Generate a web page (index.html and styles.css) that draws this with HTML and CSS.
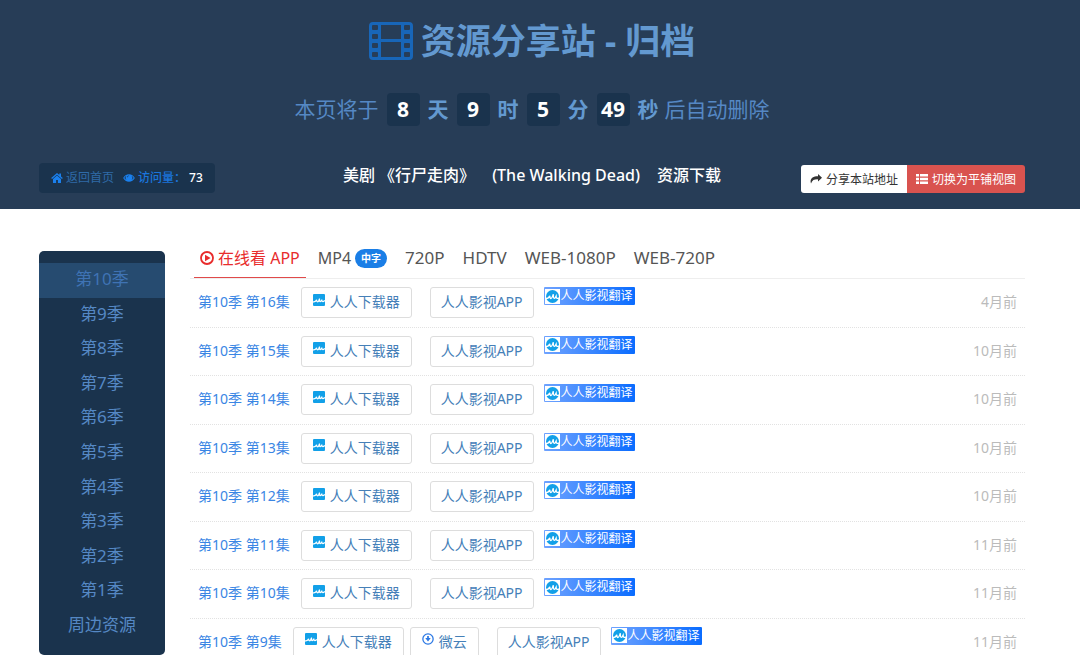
FILE: index.html
```html
<!DOCTYPE html>
<html lang="zh-CN">
<head>
    <meta charset="UTF-8">
    <meta name="viewport" content="width=device-width, initial-scale=1.0">
    <title>资源分享站 - 归档</title>
    <link rel="stylesheet" href="styles.css">
</head>
<body>
    <!-- Shared icons -->
    <svg class="sprite" aria-hidden="true">
        <symbol id="icon-film" viewBox="0 0 44 38">
            <path fill-rule="evenodd" d="M4 0h36a4 4 0 0 1 4 4v30a4 4 0 0 1-4 4H4a4 4 0 0 1-4-4V4a4 4 0 0 1 4-4zM12 3v14h20V3zM12 20v15h20V20zM4 3a1 1 0 0 0-1 1v3a1 1 0 0 0 1 1h4a1 1 0 0 0 1-1V4a1 1 0 0 0-1-1zM4 12a1 1 0 0 0-1 1v3a1 1 0 0 0 1 1h4a1 1 0 0 0 1-1v-3a1 1 0 0 0-1-1zM4 21a1 1 0 0 0-1 1v3a1 1 0 0 0 1 1h4a1 1 0 0 0 1-1v-3a1 1 0 0 0-1-1zM4 30a1 1 0 0 0-1 1v3a1 1 0 0 0 1 1h4a1 1 0 0 0 1-1v-3a1 1 0 0 0-1-1zM36 3a1 1 0 0 0-1 1v3a1 1 0 0 0 1 1h4a1 1 0 0 0 1-1V4a1 1 0 0 0-1-1zM36 12a1 1 0 0 0-1 1v3a1 1 0 0 0 1 1h4a1 1 0 0 0 1-1v-3a1 1 0 0 0-1-1zM36 21a1 1 0 0 0-1 1v3a1 1 0 0 0 1 1h4a1 1 0 0 0 1-1v-3a1 1 0 0 0-1-1zM36 30a1 1 0 0 0-1 1v3a1 1 0 0 0 1 1h4a1 1 0 0 0 1-1v-3a1 1 0 0 0-1-1z"/>
        </symbol>
        <symbol id="icon-home" viewBox="0 0 12 12">
            <path d="M6 1L.2 6l.8 1L6 2.800 11 7l.8-1L10 4.400V1.500H8.300v1.500z"/>
            <path d="M6 3.500L2 6.900V11h3.100V8h1.800v3H10V6.900z"/>
        </symbol>
        <symbol id="icon-eye" viewBox="0 0 14 12">
            <path fill-rule="evenodd" d="M7 1.500C4 1.500 1.600 3.400.2 6 1.600 8.600 4 10.500 7 10.500s5.400-1.900 6.800-4.500C12.400 3.400 10 1.500 7 1.500zM4 3.400a3.700 3.700 0 0 0 0 4.900A7 7 0 0 1 1.600 6 7 7 0 0 1 4 3.400zM10 3.400A7 7 0 0 1 12.400 6 7 7 0 0 1 10 8.300a3.700 3.700 0 0 0 0-4.900zM7 3a2.200 2.200 0 0 0-2.200 2.200h.8A1.400 1.400 0 0 1 7 3.800z"/>
        </symbol>
        <symbol id="icon-share" viewBox="0 0 12 12">
            <path d="M8 1l4 3.800-4 3.800V6.400C4.800 6.200 2.200 7 1 10.500-.6 6 2.500 3.200 8 3.200z"/>
        </symbol>
        <symbol id="icon-list" viewBox="0 0 12 12">
            <path d="M0 1h3v2.600H0zM4 1h8v2.600H4zM0 4.700h3v2.600H0zM4 4.700h8v2.600H4zM0 8.400h3V11H0zM4 8.400h8V11H4z"/>
        </symbol>
        <symbol id="icon-play" viewBox="0 0 14 14">
            <circle cx="7" cy="7" r="6" fill="none" stroke="currentColor" stroke-width="1.800"/>
            <path d="M5 3.700l5.600 3.300L5 10.300z"/>
        </symbol>
        <symbol id="icon-loader" viewBox="0 0 12 12">
            <path fill="#12a0e8" d="M0 1a1 1 0 0 1 1-1h10a1 1 0 0 1 1 1v10a1 1 0 0 1-1 1H1a1 1 0 0 1-1-1z"/>
            <path d="M0 7.800c2 .4 3-.4 3.600-2 0 1.600.4 2 1 2C5.800 7.800 6 6 6.500 4.600c0 2-.1 3 .8 3C8.200 7.600 8.400 6.600 8.800 5.600c0 1.400.2 2 1 2 1 0 1.400-.6 2.200-1.200" fill="none" stroke="#fff" stroke-width="1.200"/>
        </symbol>
        <symbol id="icon-weiyun" viewBox="0 0 14 14">
            <circle cx="7" cy="7" r="6" fill="none" stroke="currentColor" stroke-width="1.500"/>
            <path d="M6 3.500h2v2.300h2.200L7 10 3.800 5.800H6z"/>
        </symbol>
        <symbol id="icon-yyets" viewBox="0 0 15 15">
            <path fill="#fff" d="M0 0h15v15H0z"/>
            <circle cx="7.500" cy="7.500" r="6.500" fill="#12a0e8"/>
            <path d="M0 9.500c2.500.4 4-.6 4.800-2.800 0 2 .3 2.800 1.200 2.800C7.300 9.500 7.600 7 8.300 5.200c0 2.600 0 4.200 1.200 4.200 1 0 1-1.400 1.600-2.400 0 1.800.3 2.400 1.200 2.400s1.600-.4 2.700-1" fill="none" stroke="#fff" stroke-width="1.300"/>
        </symbol>
    </svg>

    <header class="header">
        <h1 class="title">
            <svg class="title-icon"><use href="#icon-film"/></svg>
            资源分享站 - 归档
        </h1>

        <div class="countdown">
            <span>本页将于</span>
            <b class="num">8</b><b>天</b>
            <b class="num">9</b><b>时</b>
            <b class="num">5</b><b>分</b>
            <b class="num">49</b><b>秒</b>
            <span class="after">后自动删除</span>
        </div>

        <div class="toolbar">
            <div class="visits">
                <a class="home" href="#"><svg class="icon-sm"><use href="#icon-home"/></svg>返回首页</a>
                <span class="views"><svg class="icon-sm"><use href="#icon-eye"/></svg>访问量：</span>
                <span class="count">73</span>
            </div>
            <h2 class="subject"><span>美剧 《行尸走肉》</span><span>(The Walking Dead)</span><span>资源下载</span></h2>
            <div class="actions">
                <button class="btn-share" type="button"><svg class="icon-sm"><use href="#icon-share"/></svg>分享本站地址</button>
                <button class="btn-view" type="button"><svg class="icon-sm"><use href="#icon-list"/></svg>切换为平铺视图</button>
            </div>
        </div>
    </header>

    <main class="content">
        <nav class="seasons">
            <a class="active" href="#">第10季</a>
            <a href="#">第9季</a>
            <a href="#">第8季</a>
            <a href="#">第7季</a>
            <a href="#">第6季</a>
            <a href="#">第5季</a>
            <a href="#">第4季</a>
            <a href="#">第3季</a>
            <a href="#">第2季</a>
            <a href="#">第1季</a>
            <a href="#">周边资源</a>
        </nav>

        <section class="panel">
            <div class="tabs">
                <a class="active" href="#"><svg class="icon"><use href="#icon-play"/></svg>在线看 APP</a>
                <a href="#">MP4<span class="badge">中字</span></a>
                <a class="res" href="#">720P</a>
                <a class="res" href="#">HDTV</a>
                <a class="res" href="#">WEB-1080P</a>
                <a class="res" href="#">WEB-720P</a>
            </div>

            <ul class="episodes">
                <li>
                    <a class="name" href="#">第10季 第16集</a>
                    <div class="links">
                        <a class="btn" href="#"><svg class="icon-app"><use href="#icon-loader"/></svg>人人下载器</a>
                        <a class="btn app" href="#">人人影视APP</a>
                        <span class="yyets"><svg class="icon-yyets"><use href="#icon-yyets"/></svg>人人影视翻译</span>
                    </div>
                    <time>4月前</time>
                </li>
                <li>
                    <a class="name" href="#">第10季 第15集</a>
                    <div class="links">
                        <a class="btn" href="#"><svg class="icon-app"><use href="#icon-loader"/></svg>人人下载器</a>
                        <a class="btn app" href="#">人人影视APP</a>
                        <span class="yyets"><svg class="icon-yyets"><use href="#icon-yyets"/></svg>人人影视翻译</span>
                    </div>
                    <time>10月前</time>
                </li>
                <li>
                    <a class="name" href="#">第10季 第14集</a>
                    <div class="links">
                        <a class="btn" href="#"><svg class="icon-app"><use href="#icon-loader"/></svg>人人下载器</a>
                        <a class="btn app" href="#">人人影视APP</a>
                        <span class="yyets"><svg class="icon-yyets"><use href="#icon-yyets"/></svg>人人影视翻译</span>
                    </div>
                    <time>10月前</time>
                </li>
                <li>
                    <a class="name" href="#">第10季 第13集</a>
                    <div class="links">
                        <a class="btn" href="#"><svg class="icon-app"><use href="#icon-loader"/></svg>人人下载器</a>
                        <a class="btn app" href="#">人人影视APP</a>
                        <span class="yyets"><svg class="icon-yyets"><use href="#icon-yyets"/></svg>人人影视翻译</span>
                    </div>
                    <time>10月前</time>
                </li>
                <li>
                    <a class="name" href="#">第10季 第12集</a>
                    <div class="links">
                        <a class="btn" href="#"><svg class="icon-app"><use href="#icon-loader"/></svg>人人下载器</a>
                        <a class="btn app" href="#">人人影视APP</a>
                        <span class="yyets"><svg class="icon-yyets"><use href="#icon-yyets"/></svg>人人影视翻译</span>
                    </div>
                    <time>10月前</time>
                </li>
                <li>
                    <a class="name" href="#">第10季 第11集</a>
                    <div class="links">
                        <a class="btn" href="#"><svg class="icon-app"><use href="#icon-loader"/></svg>人人下载器</a>
                        <a class="btn app" href="#">人人影视APP</a>
                        <span class="yyets"><svg class="icon-yyets"><use href="#icon-yyets"/></svg>人人影视翻译</span>
                    </div>
                    <time>11月前</time>
                </li>
                <li>
                    <a class="name" href="#">第10季 第10集</a>
                    <div class="links">
                        <a class="btn" href="#"><svg class="icon-app"><use href="#icon-loader"/></svg>人人下载器</a>
                        <a class="btn app" href="#">人人影视APP</a>
                        <span class="yyets"><svg class="icon-yyets"><use href="#icon-yyets"/></svg>人人影视翻译</span>
                    </div>
                    <time>11月前</time>
                </li>
                <li>
                    <a class="name" href="#">第10季 第9集</a>
                    <div class="links">
                        <a class="btn" href="#"><svg class="icon-app"><use href="#icon-loader"/></svg>人人下载器</a>
                        <a class="btn" href="#"><svg class="icon-app weiyun"><use href="#icon-weiyun"/></svg>微云</a>
                        <a class="btn app" href="#">人人影视APP</a>
                        <span class="yyets"><svg class="icon-yyets"><use href="#icon-yyets"/></svg>人人影视翻译</span>
                    </div>
                    <time>11月前</time>
                </li>
            </ul>
        </section>
    </main>
</body>
</html>
```
FILE: styles.css
```css
* {
    box-sizing: border-box;
}

body {
    margin: 0;
    height: 100vh;
    overflow: hidden;
    background-color: #fff;
    font-family: "Noto Sans", "Noto Sans CJK SC", sans-serif;
    font-size: 14px;
}

a {
    text-decoration: none;
}

svg {
    fill: currentColor;
    flex: none;
}

.sprite {
    display: none;
}

/* Header */
.header {
    padding: 16px 55px 16px 39px;
    background-color: #273d57;
    color: #6399d0;
}

.title {
    display: flex;
    justify-content: center;
    align-items: center;
    gap: 8px;
    margin: 0;
    font-size: 35px;
    line-height: 50px;
}

.title-icon {
    width: 44px;
    height: 38px;
    color: #1866b8;
}

.countdown {
    display: flex;
    justify-content: center;
    align-items: center;
    gap: 8px;
    margin-top: 27px;
    font-size: 21px;
    line-height: 33px;
    color: #5588c4;
}

.countdown b {
    color: #6399d0;
}

.countdown .num {
    width: 33px;
    border-radius: 4px;
    background-color: #1a334d;
    color: #fff;
    text-align: center;
}

.countdown .after {
    margin-left: -2px;
}

.toolbar {
    display: grid;
    grid-template-columns: 1fr auto 1fr;
    align-items: end;
    margin-top: 37px;
}

.visits {
    display: flex;
    justify-self: start;
    align-items: center;
    padding: 0 12px;
    border-radius: 4px;
    background-color: #1a334d;
    font-size: 12px;
    line-height: 30px;
}

.visits a,
.visits span {
    display: flex;
    align-items: center;
    gap: 3px;
}

.visits .home {
    margin-right: 9px;
    color: #2f6ba8;
}

.icon-sm {
    width: 12px;
    height: 12px;
}

.visits .icon-sm {
    color: #1a80ee;
}

.visits .views {
    color: #1a75dc;
    font-weight: 500;
}

.visits .count {
    margin-left: 3px;
    color: #fff;
    font-weight: 500;
}

.subject {
    display: flex;
    gap: 17px;
    margin: 0;
    color: #fff;
    font-size: 16px;
    font-weight: 500;
    line-height: 24px;
    align-self: start;
}

.actions {
    display: flex;
    justify-self: end;
}

.actions button {
    display: flex;
    align-items: center;
    gap: 4px;
    height: 28px;
    padding: 0 9px 1px;
    border: 0;
    font-family: inherit;
    font-size: 12px;
    cursor: pointer;
}

.actions .btn-share {
    border-radius: 3px 0 0 3px;
    background-color: #fff;
    color: #333;
}

.actions .btn-view {
    border-radius: 0 3px 3px 0;
    background-color: #d9534f;
    color: #fff;
}

/* Content */
.content {
    display: flex;
    align-items: flex-start;
    gap: 25px;
    padding: 30px 55px 0 39px;
}

.seasons {
    display: grid;
    grid-auto-rows: 1fr;
    width: 126px;
    min-height: 404px;
    margin-top: 12px;
    padding: 12px 0;
    border-radius: 5px;
    background-color: #1a334d;
}

.seasons a {
    display: flex;
    justify-content: center;
    align-items: center;
    padding-bottom: 2px;
    color: #5588c4;
    font-size: 17px;
    line-height: 24px;
}

.seasons .active {
    background-color: #264b70;
    color: #3f73b4;
}

.panel {
    flex: 1;
}

.tabs {
    display: flex;
    gap: 6px;
    padding-left: 4px;
    border-bottom: 1px solid #eee;
}

.tabs a {
    display: flex;
    align-items: center;
    gap: 4px;
    padding: 0 6px;
    border-bottom: 1px solid transparent;
    color: #555;
    font-size: 16px;
    line-height: 38px;
}

.tabs .res {
    font-size: 17px;
}

.tabs .active {
    border-bottom-color: #e04a4a;
    color: #e82c2c;
}

.icon {
    width: 14px;
    height: 14px;
}

.badge {
    padding: 0 6px;
    border-radius: 10px;
    background-color: #1a7ee6;
    color: #fff;
    font-size: 10px;
    font-weight: bold;
    line-height: 19px;
}

.episodes {
    display: grid;
    grid-auto-rows: 1fr;
    min-height: 388px;
    margin: 0;
    padding: 0;
    list-style: none;
}

.episodes li {
    display: flex;
    align-items: center;
    padding: 0 8px;
    border-bottom: 1px dotted #e2e2e2;
}

.name {
    margin-right: 11px;
    padding-bottom: 3px;
    color: #3a86e4;
}

.links {
    display: flex;
    align-items: flex-start;
    gap: 6px;
}

.btn {
    display: flex;
    align-items: center;
    gap: 5px;
    height: 31px;
    padding: 0 11px 3px;
    border: 1px solid #ddd;
    border-radius: 3px;
    color: #4580b8;
}

.btn.app {
    margin-left: 12px;
    padding: 0 10px 3px;
}

.icon-app {
    width: 12px;
    height: 12px;
    margin-bottom: 3px;
}

.icon-app.weiyun {
    color: #2b78e4;
}

.yyets {
    display: flex;
    align-items: center;
    gap: 1px;
    margin-left: 4px;
    padding: 0 2px 0 1px;
    border-radius: 1px;
    background: linear-gradient(90deg, #6fa3ff, #0a6cff);
    color: #fff;
    font-size: 12px;
    line-height: 18px;
}

.icon-yyets {
    width: 15px;
    height: 15px;
}

time {
    margin-left: auto;
    padding-bottom: 3px;
    color: #bbb;
}
```
